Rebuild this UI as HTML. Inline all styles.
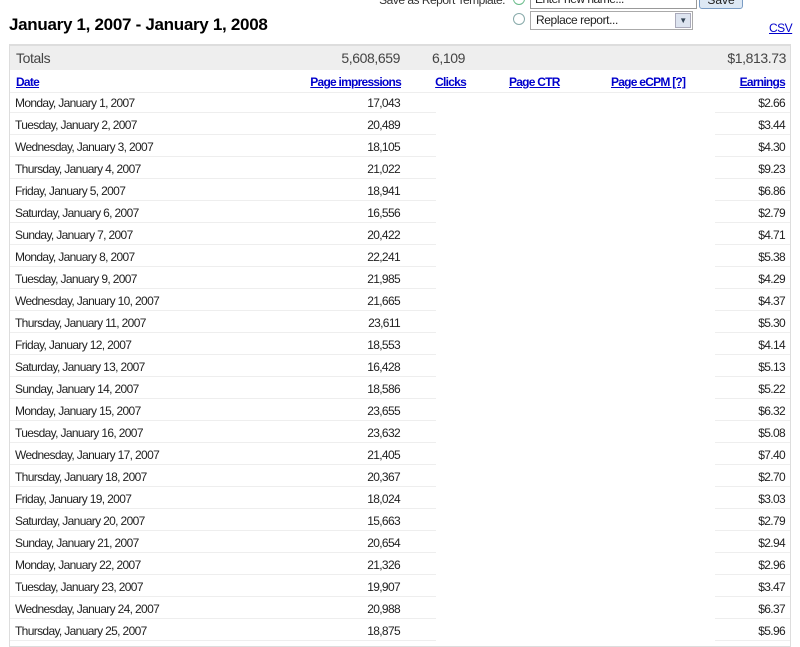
<!DOCTYPE html>
<html><head><meta charset="utf-8"><style>
body{margin:0;width:800px;height:631px;overflow:hidden;background:#fff;font-family:"Liberation Sans",Arial,sans-serif;color:#222;position:relative}
.a{position:absolute}
h1{position:absolute;left:9px;top:15px;margin:0;font-size:17px;font-weight:bold;color:#000;letter-spacing:-0.3px}
.box{position:absolute;left:9px;top:44px;width:780px;height:600px;border:1px solid #ddd;border-top:2px solid #ddd}
.tot{position:absolute;left:0;top:0;width:780px;height:24px;background:#eee;font-size:14px;color:#444;letter-spacing:-0.4px}
.tot span,.hd span,.r span{position:absolute;white-space:nowrap}
.hd{position:absolute;left:0;top:24px;width:780px;height:22px;border-bottom:1px solid #eee;font-size:12px;font-weight:bold;letter-spacing:-0.75px}
.hd span{color:#00c;text-decoration:underline;top:5px}
.r{position:absolute;left:0;width:780px;height:22px;font-size:12px;letter-spacing:-0.65px}
.r span{top:5px}
.l1{position:absolute;left:0;width:426px;bottom:0;height:1px;background:#eee}
.l2{position:absolute;left:705px;width:75px;bottom:0;height:1px;background:#eee}
</style></head><body>
<div class="a" style="right:295px;top:-7px;font-size:12px;color:#333;letter-spacing:-0.5px">Save as Report Template:</div>
<div class="a" style="left:513px;top:-7px;width:10px;height:10px;border:1px solid #6b8;border-radius:50%"></div>
<div class="a" style="left:530px;top:-10px;width:161px;height:17px;border:1px solid #999;font-size:12px;padding-left:4px;line-height:17px;letter-spacing:-0.5px">Enter new name...</div>
<div class="a" style="left:699px;top:-8px;width:42px;height:15px;border:1px solid #7a9cc4;border-radius:3px;background:#dde8f4;font-size:12px;text-align:center;line-height:15px">Save</div>
<div class="a" style="left:513px;top:13px;width:10px;height:10px;border:1px solid #8aa;border-radius:50%"></div>
<div class="a" style="left:530px;top:11px;width:161px;height:17px;border:1px solid #aaa;font-size:12px;line-height:17px;letter-spacing:-0.4px"><span style="padding-left:5px">Replace report...</span><div class="a" style="right:1px;top:1px;width:14px;height:13px;border:1px solid #aab;background:#dde4f0;font-size:8px;text-align:center;line-height:13px;color:#345">&#9660;</div></div>
<h1>January 1, 2007 - January 1, 2008</h1>
<a class="a" style="left:769px;top:21px;font-size:12px;color:#00c;text-decoration:underline;letter-spacing:-0.5px">CSV</a>
<div class="box">
<div class="tot"><span style="left:6px;top:4px">Totals</span><span style="right:390px;top:4px">5,608,659</span><span style="left:422px;top:4px">6,109</span><span style="right:4px;top:4px">$1,813.73</span></div>
<div class="hd"><span style="left:6px">Date</span><span style="right:389px">Page impressions</span><span style="right:324px">Clicks</span><span style="left:499px">Page CTR</span><span style="left:601px">Page eCPM [?]</span><span style="right:5px">Earnings</span></div>
</div>
<div class="a" style="left:10px;top:91px;width:780px">
<div class="r" style="top:0"><span style="left:5px">Monday, January 1, 2007</span><span style="right:390px">17,043</span><span style="right:5px">$2.66</span><div class="l1"></div><div class="l2"></div></div>
<div class="r" style="top:22px"><span style="left:5px">Tuesday, January 2, 2007</span><span style="right:390px">20,489</span><span style="right:5px">$3.44</span><div class="l1"></div><div class="l2"></div></div>
<div class="r" style="top:44px"><span style="left:5px">Wednesday, January 3, 2007</span><span style="right:390px">18,105</span><span style="right:5px">$4.30</span><div class="l1"></div><div class="l2"></div></div>
<div class="r" style="top:66px"><span style="left:5px">Thursday, January 4, 2007</span><span style="right:390px">21,022</span><span style="right:5px">$9.23</span><div class="l1"></div><div class="l2"></div></div>
<div class="r" style="top:88px"><span style="left:5px">Friday, January 5, 2007</span><span style="right:390px">18,941</span><span style="right:5px">$6.86</span><div class="l1"></div><div class="l2"></div></div>
<div class="r" style="top:110px"><span style="left:5px">Saturday, January 6, 2007</span><span style="right:390px">16,556</span><span style="right:5px">$2.79</span><div class="l1"></div><div class="l2"></div></div>
<div class="r" style="top:132px"><span style="left:5px">Sunday, January 7, 2007</span><span style="right:390px">20,422</span><span style="right:5px">$4.71</span><div class="l1"></div><div class="l2"></div></div>
<div class="r" style="top:154px"><span style="left:5px">Monday, January 8, 2007</span><span style="right:390px">22,241</span><span style="right:5px">$5.38</span><div class="l1"></div><div class="l2"></div></div>
<div class="r" style="top:176px"><span style="left:5px">Tuesday, January 9, 2007</span><span style="right:390px">21,985</span><span style="right:5px">$4.29</span><div class="l1"></div><div class="l2"></div></div>
<div class="r" style="top:198px"><span style="left:5px">Wednesday, January 10, 2007</span><span style="right:390px">21,665</span><span style="right:5px">$4.37</span><div class="l1"></div><div class="l2"></div></div>
<div class="r" style="top:220px"><span style="left:5px">Thursday, January 11, 2007</span><span style="right:390px">23,611</span><span style="right:5px">$5.30</span><div class="l1"></div><div class="l2"></div></div>
<div class="r" style="top:242px"><span style="left:5px">Friday, January 12, 2007</span><span style="right:390px">18,553</span><span style="right:5px">$4.14</span><div class="l1"></div><div class="l2"></div></div>
<div class="r" style="top:264px"><span style="left:5px">Saturday, January 13, 2007</span><span style="right:390px">16,428</span><span style="right:5px">$5.13</span><div class="l1"></div><div class="l2"></div></div>
<div class="r" style="top:286px"><span style="left:5px">Sunday, January 14, 2007</span><span style="right:390px">18,586</span><span style="right:5px">$5.22</span><div class="l1"></div><div class="l2"></div></div>
<div class="r" style="top:308px"><span style="left:5px">Monday, January 15, 2007</span><span style="right:390px">23,655</span><span style="right:5px">$6.32</span><div class="l1"></div><div class="l2"></div></div>
<div class="r" style="top:330px"><span style="left:5px">Tuesday, January 16, 2007</span><span style="right:390px">23,632</span><span style="right:5px">$5.08</span><div class="l1"></div><div class="l2"></div></div>
<div class="r" style="top:352px"><span style="left:5px">Wednesday, January 17, 2007</span><span style="right:390px">21,405</span><span style="right:5px">$7.40</span><div class="l1"></div><div class="l2"></div></div>
<div class="r" style="top:374px"><span style="left:5px">Thursday, January 18, 2007</span><span style="right:390px">20,367</span><span style="right:5px">$2.70</span><div class="l1"></div><div class="l2"></div></div>
<div class="r" style="top:396px"><span style="left:5px">Friday, January 19, 2007</span><span style="right:390px">18,024</span><span style="right:5px">$3.03</span><div class="l1"></div><div class="l2"></div></div>
<div class="r" style="top:418px"><span style="left:5px">Saturday, January 20, 2007</span><span style="right:390px">15,663</span><span style="right:5px">$2.79</span><div class="l1"></div><div class="l2"></div></div>
<div class="r" style="top:440px"><span style="left:5px">Sunday, January 21, 2007</span><span style="right:390px">20,654</span><span style="right:5px">$2.94</span><div class="l1"></div><div class="l2"></div></div>
<div class="r" style="top:462px"><span style="left:5px">Monday, January 22, 2007</span><span style="right:390px">21,326</span><span style="right:5px">$2.96</span><div class="l1"></div><div class="l2"></div></div>
<div class="r" style="top:484px"><span style="left:5px">Tuesday, January 23, 2007</span><span style="right:390px">19,907</span><span style="right:5px">$3.47</span><div class="l1"></div><div class="l2"></div></div>
<div class="r" style="top:506px"><span style="left:5px">Wednesday, January 24, 2007</span><span style="right:390px">20,988</span><span style="right:5px">$6.37</span><div class="l1"></div><div class="l2"></div></div>
<div class="r" style="top:528px"><span style="left:5px">Thursday, January 25, 2007</span><span style="right:390px">18,875</span><span style="right:5px">$5.96</span><div class="l1"></div><div class="l2"></div></div>
</div>
</body></html>
